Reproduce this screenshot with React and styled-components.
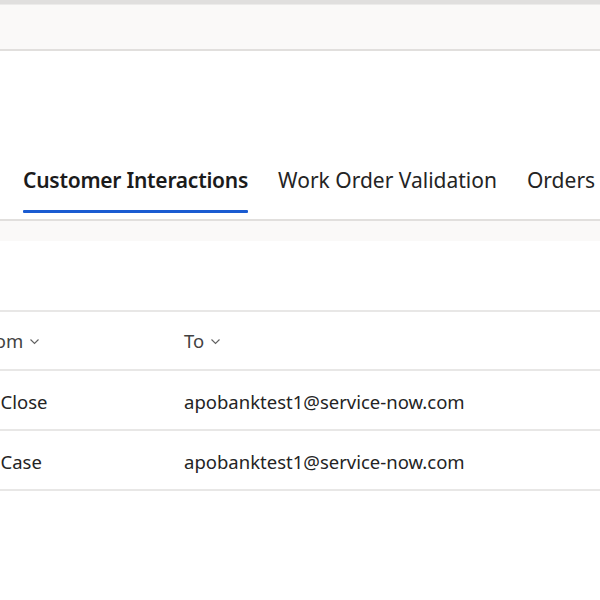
import React from 'react';
import styled, { createGlobalStyle } from 'styled-components';

const GlobalStyle = createGlobalStyle`
  html, body {
    margin: 0;
    padding: 0;
    background: #ffffff;
    font-family: "Noto Sans", "Open Sans", sans-serif;
    color: #242424;
  }
`;

const tabs = ['Customer Interactions', 'Work Order Validation', 'Orders'];

const rows = [
  { from: 'In Close', to: 'apobanktest1@service-now.com' },
  { from: 'In Case', to: 'apobanktest1@service-now.com' },
];

const App = () => {
  return (
    <Page>
      <GlobalStyle />
      <TopStrip />
      <CommandBar />
      <TabBar>
        {tabs.map((t, i) => (
          <Tab key={t} active={i === 0}>
            {t}
          </Tab>
        ))}
      </TabBar>
      <Band />
      <TableArea>
        <Table>
          <HeaderRow>
            <Cell first>
              From <Chevron />
            </Cell>
            <Cell header>
              To <Chevron />
            </Cell>
          </HeaderRow>
          {rows.map((r, i) => (
            <Row key={i}>
              <Cell first>{r.from}</Cell>
              <Cell>{r.to}</Cell>
            </Row>
          ))}
        </Table>
      </TableArea>
    </Page>
  );
};

const Chevron = () => (
  <svg width="13" height="12" viewBox="0 0 13 12" style={{ marginLeft: 5 }}>
    <path d="M2.5 4.5 L6.5 8.5 L10.5 4.5" fill="none" stroke="#616161" strokeWidth="1.1" />
  </svg>
);

export default App;

const Page = styled.div`
  width: 600px;
  height: 600px;
  overflow: hidden;
  background: #ffffff;
`;

const TopStrip = styled.div`
  height: 4px;
  background: #e0dfde;
  border-bottom: 1px solid #ecebea;
`;

const CommandBar = styled.div`
  height: 44px;
  background: #faf9f8;
  border-bottom: 2px solid #e1dfdd;
`;

const TabBar = styled.div`
  display: flex;
  align-items: flex-end;
  height: 170px;
  padding-left: 23px;
  gap: 30px;
  border-bottom: 2px solid #e1dfdd;
  box-sizing: border-box;
  white-space: nowrap;
`;

const Tab = styled.div`
  position: relative;
  font-size: 21px;
  line-height: 28px;
  padding-bottom: 25px;
  font-weight: ${(p) => (p.active ? 600 : 400)};
  color: ${(p) => (p.active ? '#1b1b1b' : '#242424')};
  letter-spacing: ${(p) => (p.active ? '-0.25px' : '0')};

  &::after {
    content: '';
    position: absolute;
    left: 0;
    right: 0;
    bottom: 6px;
    height: 3px;
    border-radius: 1px;
    background: ${(p) => (p.active ? '#1a5bd1' : 'transparent')};
  }
`;

const Band = styled.div`
  height: 20px;
  background: #faf9f8;
`;

const TableArea = styled.div`
  padding-top: 69px;
  overflow: hidden;
`;

const Table = styled.div`
  display: flex;
  flex-direction: column;
  border-top: 2px solid #e8e7e6;
`;

const HeaderRow = styled.div`
  display: grid;
  grid-template-columns: 165px 1fr;
  height: 57px;
  align-items: center;
  border-bottom: 2px solid #e8e7e6;
  color: #424242;
  font-size: 18.5px;
`;

const Row = styled.div`
  display: grid;
  grid-template-columns: 165px 1fr;
  column-gap: 2px;
  height: 60px;
  align-items: center;
  font-size: 18.5px;
  color: #242424;
  background: linear-gradient(#e8e7e6, #e8e7e6) bottom / 100% 2px no-repeat;
`;

const Cell = styled.div`
  display: flex;
  align-items: center;
  white-space: nowrap;
  padding-left: ${(p) => (p.first ? '0' : p.header ? '19px' : '17px')};
  margin-left: ${(p) => (p.first ? '-22px' : '0')};
`;
